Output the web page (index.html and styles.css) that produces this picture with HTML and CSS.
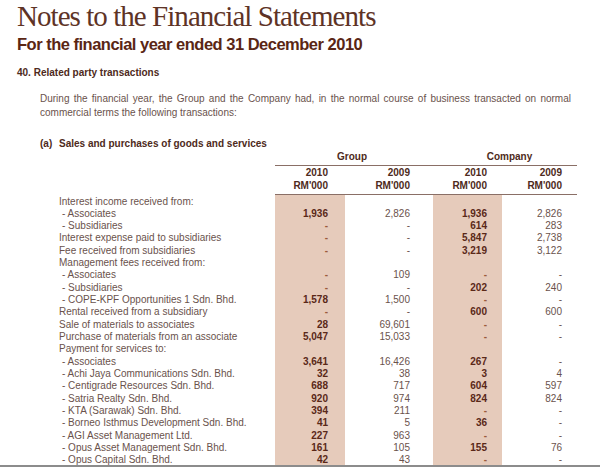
FILE: index.html
```html
<!DOCTYPE html>
<html>
<head>
<meta charset="utf-8">
<link rel="stylesheet" href="styles.css">
</head>
<body>
<div class="page">
  <h1 class="title">Notes to the Financial Statements</h1>
  <h2 class="subtitle">For the financial year ended 31 December 2010</h2>
  <h3 class="note">40. Related party transactions</h3>
  <div class="para">
    <div class="para-line">During the financial year, the Group and the Company had, in the normal course of business transacted on normal</div>
    <div>commercial terms the following transactions:</div>
  </div>
  <h4 class="sub"><span class="sub-num">(a)</span>Sales and purchases of goods and services</h4>
  <table class="fin">
    <colgroup>
      <col class="c-label"><col class="c-g10"><col class="c-g09"><col class="c-c10"><col class="c-c09">
    </colgroup>
    <thead>
      <tr class="h-group">
        <th></th>
        <th colspan="2" class="grp">Group</th>
        <th colspan="2" class="cmp">Company</th>
      </tr>
      <tr class="h-year">
        <th></th>
        <th class="n1">2010<br>RM'000</th>
        <th class="n2">2009<br>RM'000</th>
        <th class="n3">2010<br>RM'000</th>
        <th class="n4">2009<br>RM'000</th>
      </tr>
    </thead>
    <tbody>
      <tr><td class="lbl">Interest income received from:</td><td class="n1 cur"></td><td class="n2"></td><td class="n3 cur"></td><td class="n4"></td></tr>
      <tr><td class="lbl ind">- Associates</td><td class="n1 cur">1,936</td><td class="n2">2,826</td><td class="n3 cur">1,936</td><td class="n4">2,826</td></tr>
      <tr><td class="lbl ind">- Subsidiaries</td><td class="n1 cur dash">-</td><td class="n2">-</td><td class="n3 cur">614</td><td class="n4">283</td></tr>
      <tr><td class="lbl">Interest expense paid to subsidiaries</td><td class="n1 cur dash">-</td><td class="n2">-</td><td class="n3 cur">5,847</td><td class="n4">2,738</td></tr>
      <tr><td class="lbl">Fee received from subsidiaries</td><td class="n1 cur dash">-</td><td class="n2">-</td><td class="n3 cur">3,219</td><td class="n4">3,122</td></tr>
      <tr><td class="lbl">Management fees received from:</td><td class="n1 cur"></td><td class="n2"></td><td class="n3 cur"></td><td class="n4"></td></tr>
      <tr><td class="lbl ind">- Associates</td><td class="n1 cur dash">-</td><td class="n2">109</td><td class="n3 cur dash">-</td><td class="n4">-</td></tr>
      <tr><td class="lbl ind">- Subsidiaries</td><td class="n1 cur dash">-</td><td class="n2">-</td><td class="n3 cur">202</td><td class="n4">240</td></tr>
      <tr><td class="lbl ind">- COPE-KPF Opportunities 1 Sdn. Bhd.</td><td class="n1 cur">1,578</td><td class="n2">1,500</td><td class="n3 cur dash">-</td><td class="n4">-</td></tr>
      <tr><td class="lbl">Rental received from a subsidiary</td><td class="n1 cur dash">-</td><td class="n2">-</td><td class="n3 cur">600</td><td class="n4">600</td></tr>
      <tr><td class="lbl">Sale of materials to associates</td><td class="n1 cur">28</td><td class="n2">69,601</td><td class="n3 cur dash">-</td><td class="n4">-</td></tr>
      <tr><td class="lbl">Purchase of materials from an associate</td><td class="n1 cur">5,047</td><td class="n2">15,033</td><td class="n3 cur dash">-</td><td class="n4">-</td></tr>
      <tr><td class="lbl">Payment for services to:</td><td class="n1 cur"></td><td class="n2"></td><td class="n3 cur"></td><td class="n4"></td></tr>
      <tr><td class="lbl ind">- Associates</td><td class="n1 cur">3,641</td><td class="n2">16,426</td><td class="n3 cur">267</td><td class="n4">-</td></tr>
      <tr><td class="lbl ind">- Achi Jaya Communications Sdn. Bhd.</td><td class="n1 cur">32</td><td class="n2">38</td><td class="n3 cur">3</td><td class="n4">4</td></tr>
      <tr><td class="lbl ind">- Centigrade Resources Sdn. Bhd.</td><td class="n1 cur">688</td><td class="n2">717</td><td class="n3 cur">604</td><td class="n4">597</td></tr>
      <tr><td class="lbl ind">- Satria Realty Sdn. Bhd.</td><td class="n1 cur">920</td><td class="n2">974</td><td class="n3 cur">824</td><td class="n4">824</td></tr>
      <tr><td class="lbl ind">- KTA (Sarawak) Sdn. Bhd.</td><td class="n1 cur">394</td><td class="n2">211</td><td class="n3 cur dash">-</td><td class="n4">-</td></tr>
      <tr><td class="lbl ind">- Borneo Isthmus Development Sdn. Bhd.</td><td class="n1 cur">41</td><td class="n2">5</td><td class="n3 cur">36</td><td class="n4">-</td></tr>
      <tr><td class="lbl ind">- AGI Asset Management Ltd.</td><td class="n1 cur">227</td><td class="n2">963</td><td class="n3 cur dash">-</td><td class="n4">-</td></tr>
      <tr><td class="lbl ind">- Opus Asset Management Sdn. Bhd.</td><td class="n1 cur">161</td><td class="n2">105</td><td class="n3 cur">155</td><td class="n4">76</td></tr>
      <tr><td class="lbl ind">- Opus Capital Sdn. Bhd.</td><td class="n1 cur">42</td><td class="n2">43</td><td class="n3 cur dash">-</td><td class="n4">-</td></tr>
    </tbody>
  </table>
  <div class="edge"></div>
</div>
</body>
</html>
```
FILE: styles.css
```css
* { box-sizing: border-box; }
html, body { margin: 0; padding: 0; background: #ffffff; }
body {
  width: 600px;
  height: 467px;
  overflow: hidden;
  font-family: "Liberation Sans", Arial, sans-serif;
  color: #6a524c;
}
.page { position: relative; width: 600px; height: 467px; }

.title {
  margin: 0;
  padding-left: 17px;
  font-family: "Liberation Serif", "Times New Roman", serif;
  font-weight: normal;
  font-size: 29px;
  line-height: 32px;
  letter-spacing: -0.95px;
  color: #5e3326;
}
.subtitle {
  margin: 2px 0 0 0;
  padding-left: 17px;
  font-size: 16.5px;
  line-height: 20px;
  letter-spacing: -0.5px;
  font-weight: bold;
  color: #5a2614;
}
.note {
  margin: 12px 0 0 0;
  padding-left: 17px;
  font-size: 10px;
  line-height: 14px;
  font-weight: bold;
  color: #4e2a20;
}
.para {
  margin: 12px 0 0 0;
  padding-left: 40px;
  width: 571px;
  font-size: 10px;
  line-height: 14px;
  color: #6a524c;
}
.para-line { text-align: justify; text-align-last: justify; }
.sub {
  margin: 18px 0 0 0;
  padding-left: 40px;
  font-size: 10px;
  line-height: 12px;
  font-weight: bold;
  color: #4e2a20;
}
.sub-num { display: inline-block; width: 19px; }

.fin {
  border-collapse: collapse;
  table-layout: fixed;
  width: 577px;
  font-size: 10px;
}
.c-label { width: 275px; }
.c-g10 { width: 70px; }
.c-g09 { width: 88px; }
.c-c10 { width: 69px; }
.c-c09 { width: 75px; }

.fin th {
  font-weight: bold;
  color: #4e2a20;
  padding: 0;
  line-height: 13px;
}
.h-group th { padding-bottom: 2px; }
.h-group .grp, .h-group .cmp { border-bottom: 1px solid #8a6f66; text-align: center; }
.h-group .grp { padding-right: 4px; }
.h-group .cmp { padding-left: 9px; }
.h-year th { padding-bottom: 2px; }
.h-year .n1, .h-year .n2, .h-year .n3, .h-year .n4 { border-bottom: 1px solid #8a6f66; }

.fin td {
  padding: 0;
  line-height: 12.33px;
  height: 12.33px;
  white-space: nowrap;
}
.n1, .n2, .n3, .n4 { text-align: right; }
.n1 { padding-right: 17px !important; }
.n2 { padding-right: 23px !important; }
.n3 { padding-right: 15px !important; }
.n4 { padding-right: 15px !important; }
.fin td.n2, .fin td.n4 { color: #6a524c; }
.fin td.cur { background: #e6cbbb; font-weight: bold; color: #5a2818; }
.fin td.dash { color: #9a5a3c; }
.fin tbody tr:first-child td { padding-top: 1px; }
.lbl { padding-left: 59px !important; color: #6a524c; }
.lbl.ind { padding-left: 62px !important; }

.edge {
  position: absolute;
  left: 0; right: 0; bottom: 0;
  height: 2px;
  background: #8c8c8c;
}
```
